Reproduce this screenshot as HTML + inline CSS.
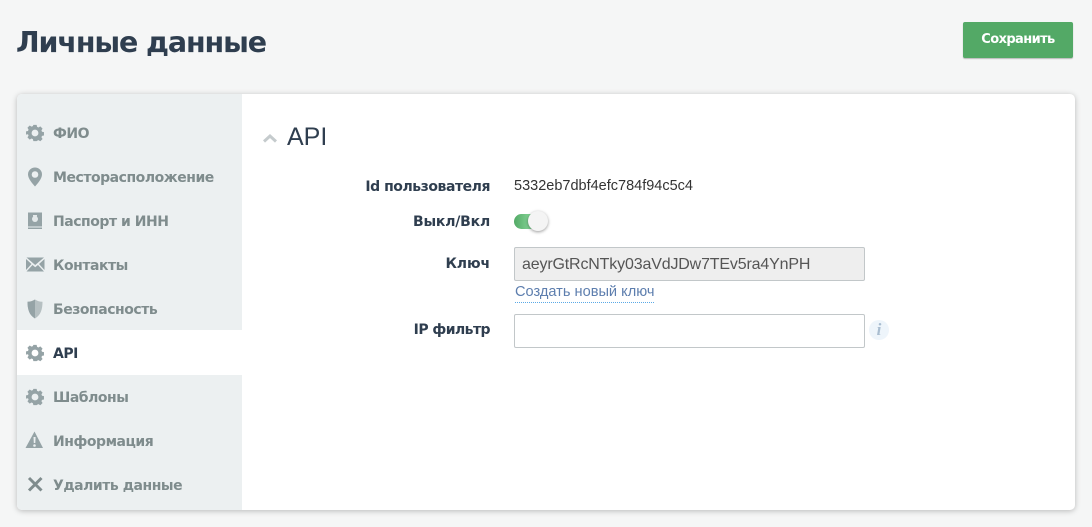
<!DOCTYPE html>
<html lang="ru">
<head>
<meta charset="utf-8">
<title>Личные данные</title>
<style>
html,body{margin:0;padding:0;width:1092px;height:527px;overflow:hidden;background:#f5f6f6;}
*{box-sizing:border-box;}
.t{position:absolute;white-space:nowrap;line-height:1;}
.a{font-family:"Liberation Sans",sans-serif;}
h1{position:absolute;margin:0;left:16px;top:25px;font-size:28.5px;line-height:36px;color:#2f3e4f;font-family:"DejaVu Sans",sans-serif;font-weight:700;white-space:nowrap;letter-spacing:-1.13px;}
.btn{position:absolute;left:963px;top:22px;width:110px;height:36px;background:#53a966;border-radius:2px;box-shadow:0 1px 1px rgba(0,0,0,.25);color:#fff;text-align:center;font:700 13px/35px "DejaVu Sans",sans-serif;letter-spacing:-.6px;}
.card{position:absolute;left:17px;top:94px;width:1058px;height:416px;background:#fff;border-radius:5px;box-shadow:0 1px 6px rgba(0,0,0,.25);overflow:hidden;}
.side{position:absolute;left:0;top:0;width:225px;height:416px;background:#ecf0f1;}
.act{position:absolute;left:0;top:236px;width:225px;height:45px;background:#fff;}
.m{font-size:14px;color:#7f8c8d;left:53px;font-family:"DejaVu Sans",sans-serif;font-weight:700;letter-spacing:-.47px;}
.l{font-size:14px;color:#2f3e4f;font-family:"DejaVu Sans",sans-serif;font-weight:700;letter-spacing:-.45px;text-align:right;right:602px;}
.ic{position:absolute;left:24px;width:22px;height:22px;}
.inp{position:absolute;left:514px;width:351px;height:34px;border:1px solid #c2c7c9;border-radius:2px;background:#fff;}
</style>
</head>
<body>
<h1>Личные данные</h1>
<div class="btn">Сохранить</div>
<div class="card">
  <div class="side"></div>
  <div class="act"></div>
</div>

<svg width="0" height="0" style="position:absolute"><defs>
<symbol id="gear" viewBox="-2.500 -2.500 27 27"><path fill="#95a3a6" fill-rule="evenodd" d="M9 1h4l.6 2.500 1.700.7 2.200-1.400 2.800 2.800-1.400 2.200.7 1.700 2.400.5v4l-2.400.5-.7 1.700 1.400 2.200-2.800 2.800-2.200-1.400-1.700.7L13 21H9l-.6-2.500-1.700-.7-2.200 1.400-2.800-2.800 1.400-2.200-.7-1.700L0 13V9l2.400-.5.7-1.700-1.400-2.200 2.800-2.800 2.200 1.400 1.700-.7zM11 6.800a4.200 4.200 0 1 0 0 8.400 4.200 4.200 0 0 0 0-8.400z"/></symbol>
</defs></svg>

<svg class="ic" style="top:122px"><use href="#gear"/></svg>
<svg class="ic" style="top:166px" viewBox="0 0 22 22"><path fill="#95a3a6" fill-rule="evenodd" d="M11 1.500a7 7 0 0 0-7 7c0 4.300 5 9.700 7 12 2-2.300 7-7.700 7-12a7 7 0 0 0-7-7zm0 3.700a3.300 3.300 0 1 1 0 6.600 3.300 3.300 0 0 1 0-6.600z"/></svg>
<svg class="ic" style="top:210px" viewBox="0 0 22 22"><path fill="#95a3a6" d="M4 2.500h14v14H4zM4 17.500h14v1.500H4z"/><circle cx="11" cy="9" r="3" fill="#e4e9ea"/><rect x="9" y="5" width="4" height="1.500" fill="#e4e9ea"/></svg>
<svg class="ic" style="top:254px" viewBox="0 0 22 22"><path fill="#95a3a6" d="M2.500 3.500h17.500L11.200 11zM2 5l5.500 5L2 16zM20.500 5v11L15 10zM8.500 11l2.700 2.300L14 11l6 6.500H2.500z"/></svg>
<svg class="ic" style="top:298px" viewBox="0 0 22 22"><path fill="#b6c0c2" d="M11 1.500c2.500 1.700 4.700 2.200 7.500 2.300 0 7.200-1.500 13.300-7.500 16.700-6-3.400-7.500-9.500-7.500-16.700 2.800-.1 5-.6 7.500-2.300z"/><path fill="#95a3a6" d="M11 1.500v19c-6-3.400-7.500-9.500-7.500-16.700 2.800-.1 5-.6 7.500-2.300z"/></svg>
<svg class="ic" style="top:342px"><use href="#gear"/></svg>
<svg class="ic" style="top:386px"><use href="#gear"/></svg>
<svg class="ic" style="top:430px" viewBox="0 0 22 22"><path fill="#95a3a6" fill-rule="evenodd" d="M10.500 1.500 19 18H1.500zM9.500 7l.3 6h1.500l.3-6zm1 7.200a1.300 1.300 0 1 0 0 2.600 1.300 1.300 0 0 0 0-2.600z"/></svg>
<svg class="ic" style="top:474px" viewBox="0 0 22 22"><path fill="none" stroke="#7f8c8d" stroke-width="3" d="M5 4l12.500 12.500M17.500 4 5 16.500"/></svg>

<div class="t m" style="top:127px">ФИО</div>
<div class="t m" style="top:171px">Месторасположение</div>
<div class="t m" style="top:215px">Паспорт и ИНН</div>
<div class="t m" style="top:259px">Контакты</div>
<div class="t m" style="top:303px">Безопасность</div>
<div class="t m" style="top:347px;color:#2f3e4f">API</div>
<div class="t m" style="top:391px">Шаблоны</div>
<div class="t m" style="top:435px">Информация</div>
<div class="t m" style="top:479px">Удалить данные</div>

<svg style="position:absolute;left:263px;top:133px" width="14" height="10" viewBox="0 0 14 10"><path d="M1 8.500 7 3l6 5.500" fill="none" stroke="#c5cbcd" stroke-width="3"/></svg>
<div class="t a" style="left:287px;top:125px;font-size:25px;color:#2f3e4f">API</div>

<div class="t l" style="top:180px">Id пользователя</div>
<div class="t a" style="left:514px;top:179px;font-size:14.5px;color:#333">5332eb7dbf4efc784f94c5c4</div>

<div class="t l" style="top:215px;letter-spacing:-.2px">Выкл/Вкл</div>
<div style="position:absolute;left:514px;top:214px;width:30px;height:15px;border-radius:8px;background:linear-gradient(90deg,#53a966 0,#7fd091 50%,#7fd091 100%)"></div>
<div style="position:absolute;left:528px;top:211px;width:20px;height:20px;border-radius:50%;background:#f4f4f4;box-shadow:0 1px 3px rgba(0,0,0,.4)"></div>

<div class="t l" style="top:257px;letter-spacing:-.1px">Ключ</div>
<div class="inp" style="top:247px;background:#eee;"></div>
<div class="t a" style="left:522px;top:257px;font-size:16px;color:#555;letter-spacing:-.16px">aeyrGtRcNTky03aVdJDw7TEv5ra4YnPH</div>
<div class="t a" style="left:515px;top:283px;font-size:14.6px;line-height:18px;height:20px;color:#5d7eae;border-bottom:1px dotted #5aa9e6">Создать новый ключ</div>

<div class="t l" style="top:323px;letter-spacing:-.55px">IP фильтр</div>
<div class="inp" style="top:314px"></div>
<div style="position:absolute;left:869px;top:320px;width:20px;height:20px;border-radius:50%;background:#eef5fb"></div>
<div class="t" style="left:869px;top:321px;width:20px;text-align:center;font:italic 700 17px/18px 'Liberation Serif',serif;color:#a9bdd0">i</div>
</body>
</html>
